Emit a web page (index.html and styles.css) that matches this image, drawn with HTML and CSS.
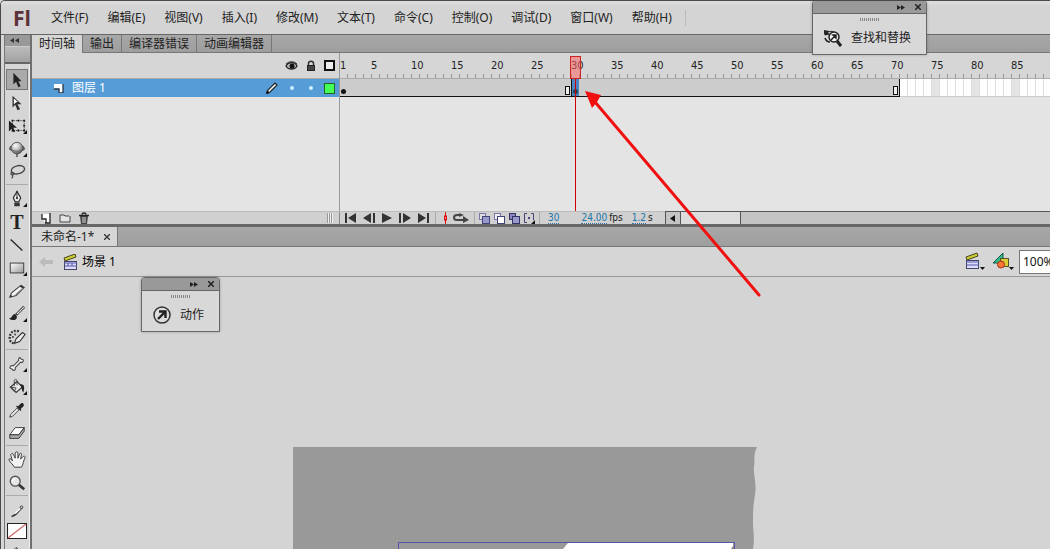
FILE: index.html
```html
<!DOCTYPE html>
<html lang="zh-CN">
<head>
	<meta charset="utf-8">
	<title>未命名-1*</title>
	<link rel="stylesheet" href="styles.css">
</head>
<body>

<div class="app">

	<header class="menubar">
		<span class="logo">Fl</span>
		<nav class="menu">
			<button>文件(F)</button>
			<button>编辑(E)</button>
			<button>视图(V)</button>
			<button>插入(I)</button>
			<button>修改(M)</button>
			<button>文本(T)</button>
			<button>命令(C)</button>
			<button>控制(O)</button>
			<button>调试(D)</button>
			<button>窗口(W)</button>
			<button>帮助(H)</button>
		</nav>
	</header>

	<div class="work">

		<aside class="toolbox">
			<button class="collapse" aria-label="折叠"><svg width="9" height="5" viewBox="0 0 9 5"><path d="M4 0v5L0 2.500zM9 0v5L5 2.500z" fill="#333"/></svg></button>
			<div class="toolhead"></div>
			<div class="tools">
				<button class="tool on" aria-label="选择工具"><svg viewBox="0 0 20 20"><path d="M6 2v13l3-3 2.500 6 2.500-1-2.500-5.500H15z" fill="#222"/></svg></button>
				<button class="tool" aria-label="部分选取工具"><svg viewBox="0 0 20 20"><path d="M5 2v13l3-3 2.500 6 3-1-3-5.500H15z" fill="#333"/><path d="M6.500 5v6.500L9.500 9H11z" fill="#fff"/></svg></button>
				<button class="tool more" aria-label="任意变形工具"><svg viewBox="0 0 20 20"><rect x="5" y="4" width="13" height="11" fill="none" stroke="#222" stroke-dasharray="1 1"/><path d="M4 3h2v2H4zM10.500 3h2v2h-2zM17 3h2v2h-2zM17 8.500h2v2h-2zM17 14h2v2h-2zM10.500 14h2v2h-2zM4 14h2v2H4z" fill="#111"/><path d="M1 4v12l3-3 2 4 2-1-2-4h4z" fill="#222"/></svg></button>
				<button class="tool more" aria-label="3D 旋转工具"><svg viewBox="0 0 20 20"><defs><radialGradient id="ball" cx=".38" cy=".3" r=".75"><stop offset="0" stop-color="#fff"/><stop offset=".5" stop-color="#bbb"/><stop offset="1" stop-color="#444"/></radialGradient></defs><path d="M4 7c-4 3-2 5 6 5s10-2 6-5M10 12v7" fill="none" stroke="#444" stroke-width="1.500"/><circle cx="10" cy="9" r="6.500" fill="url(#ball)" stroke="#555"/><path d="M4 11c3 2 9 2 12 0" fill="none" stroke="#666"/></svg></button>
				<button class="tool" aria-label="套索工具"><svg viewBox="0 0 20 20"><ellipse cx="11" cy="7.500" rx="7.500" ry="4.500" fill="none" stroke="#444" stroke-width="1.500" transform="rotate(-12 11 7.500)"/><path d="M5 10c-3 1-2 4 1 3 2-1 0-3-2-2M5 13c1 2 0 3-1 4" fill="none" stroke="#444" stroke-width="1.200"/></svg></button>
				<hr>
				<button class="tool more" aria-label="钢笔工具"><svg viewBox="0 0 20 20"><path d="M10 1c1 4 4 6 4 8l-2 4H8L6 9c0-2 3-4 4-8z" fill="#eee" stroke="#222" stroke-width="1.200"/><path d="M10 2v6" stroke="#222"/><circle cx="10" cy="9" r="1.200" fill="#222"/><path d="M7 14h6v4H7z" fill="#333"/></svg></button>
				<button class="tool letter" aria-label="文本工具">T</button>
				<button class="tool" aria-label="线条工具"><svg viewBox="0 0 20 20"><path d="M3 4l13 12" stroke="#222" stroke-width="1.500"/></svg></button>
				<button class="tool more" aria-label="矩形工具"><svg viewBox="0 0 20 20"><defs><linearGradient id="box" x2="1" y2="1"><stop offset="0" stop-color="#fff"/><stop offset="1" stop-color="#999"/></linearGradient></defs><rect x="2.500" y="4.500" width="15" height="11" fill="url(#box)" stroke="#333"/></svg></button>
				<button class="tool" aria-label="铅笔工具"><svg viewBox="0 0 20 20"><path d="M2 17l2-5 10-8 4 2-9 9z" fill="#f4f4f4" stroke="#444" stroke-width="1.200"/><path d="M2 17l1-3 2 2zM13 5l3 2 2-1-3-3z" fill="#333"/><path d="M8 14l8-7" stroke="#999"/></svg></button>
				<button class="tool more" aria-label="刷子工具"><svg viewBox="0 0 20 20"><path d="M18 2l-9 9" stroke="#333" stroke-width="3"/><path d="M18 2l-8 8" stroke="#ddd" stroke-width="1.200"/><path d="M1 15c4 0 3-5 7-5l2 3c0 4-5 5-9 2z" fill="#222"/></svg></button>
				<button class="tool" aria-label="喷涂刷工具"><svg viewBox="0 0 20 20"><path d="M7 17l2-5 7-7 3 2-6 8z" fill="#eee" stroke="#333" stroke-width="1.200"/><path d="M12 4C6 1 1 6 2 13c1 3 3 4 6 4" fill="none" stroke="#333" stroke-width="2.500" stroke-dasharray="2 1.500"/><path d="M9 7c-3 0-4 3-4 6" fill="none" stroke="#444" stroke-width="2" stroke-dasharray="2 2"/></svg></button>
				<hr>
				<button class="tool more" aria-label="骨骼工具"><svg viewBox="0 0 20 20"><path d="M6 12l6-6c-1-3 2-4 2-2 1 1 1 1 2 1 2 0 1 4-2 3l-6 6c1 3-2 4-3 2-1-1-1-1-2-1-2-1 0-4 3-3z" fill="#f4f4f4" stroke="#444" stroke-width="1.200"/></svg></button>
				<button class="tool more" aria-label="颜料桶工具"><svg viewBox="0 0 20 20"><path d="M3 10l7-6 6 6-7 6z" fill="#e8e8e8" stroke="#333" stroke-width="1.200"/><path d="M13 7c5-1 6 3 4 9-2-2-1-5-4-9z" fill="#222"/><path d="M7 9V3c0-2 3-2 3 0v5M2 10l7 1-2 4z" fill="none" stroke="#444"/></svg></button>
				<button class="tool" aria-label="滴管工具"><svg viewBox="0 0 20 20"><path d="M2 18l1-3 7-7 2 2-7 7z" fill="#eee" stroke="#333"/><path d="M9 6l5 5 1-1-1-1 3-3c2-2-1-5-3-3l-3 3-1-1z" fill="#222"/></svg></button>
				<button class="tool" aria-label="橡皮擦工具"><svg viewBox="0 0 20 20"><path d="M2 12l6-8h10l-6 8z" fill="#fff" stroke="#333"/><path d="M2 12h10l6-8v4l-6 8H2z" fill="#aaa" stroke="#333"/></svg></button>
				<hr>
				<button class="tool" aria-label="手形工具"><svg viewBox="0 0 20 20"><path d="M7 18c-1-3-6-6-6-9 1-1 3 0 4 2L3 4c1-2 3-1 3 0l2 4V2c1-2 3-1 3 0v6l2-5c1-1 2-1 2 1l-1 5 3-3c1-1 2 0 2 1-2 4-2 8-4 11z" fill="#f2f2f2" stroke="#333"/></svg></button>
				<button class="tool" aria-label="缩放工具"><svg viewBox="0 0 20 20"><path d="M11 11l7 6" stroke="#333" stroke-width="3"/><circle cx="8" cy="8" r="5.500" fill="#e6e6e6" stroke="#555" stroke-width="1.500"/><path d="M5 8c0-2 2-3 3-3" fill="none" stroke="#fff" stroke-width="1.500"/></svg></button>
				<hr>
				<button class="tool" aria-label="笔触颜色"><svg viewBox="0 0 20 20"><path d="M4 17c4 0 5-3 11-9" fill="none" stroke="#333" stroke-width="2"/><path d="M8 14l6-6" stroke="#fff" stroke-width="1.500"/><circle cx="15" cy="7" r="1.500" fill="#ccc" stroke="#333"/></svg></button>
				<button class="swatch" aria-label="无笔触"><svg viewBox="0 0 20 16"><rect x=".5" y=".5" width="19" height="15" fill="#fff" stroke="#222"/><path d="M1 15L19 1" stroke="#c66" stroke-width="1.200"/></svg></button>
				<button class="tool" aria-label="填充颜色"><svg viewBox="0 0 20 20"><path d="M4 10l5-5 7 6-6 6z" fill="#e8e8e8" stroke="#333"/><path d="M9 5l7 6v5l-5-6z" fill="#333"/></svg></button>
			</div>
		</aside>

		<main class="main">

			<div class="tabs">
				<button class="tab on">时间轴</button>
				<button class="tab">输出</button>
				<button class="tab">编译器错误</button>
				<button class="tab">动画编辑器</button>
			</div>

			<section class="timeline">
				<div class="layers">
					<div class="layerhead">
						<span class="cell"><svg width="13" height="10" viewBox="0 0 13 10"><path d="M1 5c2-4 9-5 11 0-2 4-9 4-11 0z" fill="#bbb" stroke="#222" stroke-width="1.300"/><circle cx="7" cy="5" r="2.500" fill="#111"/><path d="M1 3c3-3 8-3 11 0" fill="none" stroke="#333"/></svg></span>
						<span class="cell"><svg width="10" height="11" viewBox="0 0 10 11"><path d="M2.500 5V3.500c0-3 5-3 5 0V5" fill="none" stroke="#333" stroke-width="1.500"/><path d="M1 5h8v6H1z" fill="#222"/><path d="M2 7h6M2 9h6" stroke="#666"/></svg></span>
						<span class="cell"><i class="outline"></i></span>
					</div>
					<div class="layer">
						<svg class="page" width="10" height="10" viewBox="0 0 10 10"><path d="M0 1h9v9H5V6H0z" fill="#fff"/><path d="M9 1v9H5V6H0" fill="none" stroke="#234" stroke-width="1.300"/></svg>
						<span class="name">图层 1</span>
						<svg width="14" height="14" viewBox="0 0 14 14"><path d="M2 12l1-3 7-7 2 2-7 7z" fill="#fff" stroke="#222" stroke-width="1.200"/><path d="M1 13l1-4 3 3z" fill="#111"/></svg>
						<span class="cell"><i class="dot"></i></span>
						<span class="cell"><i class="dot"></i></span>
						<span class="cell"><i class="outline green"></i></span>
					</div>
				</div>

				<div class="frames">
					<div class="ruler">
						<span class="first">1</span><span>5</span><span>10</span><span>15</span><span>20</span><span>25</span><span>30</span><span>35</span><span>40</span><span>45</span><span>50</span><span>55</span><span>60</span><span>65</span><span>70</span><span>75</span><span>80</span><span>85</span>
					</div>
					<div class="track">
						<div class="span" style="width: 232px"><i class="key"></i><i class="end"></i></div>
						<div class="span" style="width: 328px"><i class="key picked"></i><i class="end"></i></div>
						<div class="blank"></div>
					</div>
					<div class="playhead"></div>
				</div>
			</section>

			<div class="controls">
				<div class="layerbuttons">
					<button aria-label="新建图层"><svg width="10" height="11" viewBox="0 0 10 11"><path d="M1 1h8v9H5L1 6z" fill="#fff"/><path d="M9 0v10H4M1 1v5h4v4" fill="none" stroke="#222" stroke-width="1.300"/></svg></button>
					<button aria-label="新建文件夹"><svg width="12" height="10" viewBox="0 0 12 10"><path d="M1 2h4l1 1h5v6H1z" fill="#e4e4e4"/><path d="M1 9V2h4l1 1h4M11 3v6H1" fill="none" stroke="#444"/></svg></button>
					<button aria-label="删除"><svg width="10" height="12" viewBox="0 0 10 12"><path d="M1 4h8l-1 8H2z" fill="#444"/><path d="M4 5v6M6 5v6" stroke="#ddd"/><path d="M0 3.500h10M3 2.500c0-2 4-2 4 0" fill="none" stroke="#222" stroke-width="1.300"/></svg></button>
					<i class="grip"></i>
				</div>
				<div class="playback">
					<button aria-label="第一帧"><svg width="12" height="10" viewBox="0 0 12 10"><path d="M0 0h2v10H0zM11 0v10L3 5z"/></svg></button>
					<button aria-label="后退一帧"><svg width="12" height="10" viewBox="0 0 12 10"><path d="M10 0h2v10h-2zM8 0v10L0 5z"/></svg></button>
					<button aria-label="播放"><svg width="12" height="10" viewBox="0 0 12 10"><path d="M1 0v10l10-5z"/></svg></button>
					<button aria-label="前进一帧"><svg width="12" height="10" viewBox="0 0 12 10"><path d="M0 0h2v10H0zM4 0v10l8-5z"/></svg></button>
					<button aria-label="最后一帧"><svg width="12" height="10" viewBox="0 0 12 10"><path d="M10 0h2v10h-2zM1 0v10l8-5z"/></svg></button>
				</div>
				<div class="loop">
					<button aria-label="帧居中"><svg width="5" height="12" viewBox="0 0 5 12"><path d="M2.500 0v12" stroke="#d11"/><rect x="1.500" y="4" width="2" height="4" fill="#f88" stroke="#d11"/></svg></button>
					<button aria-label="循环"><svg width="16" height="10" viewBox="0 0 16 10"><path d="M8 2H4C0 2 0 7 4 7h7" fill="none" stroke="#444" stroke-width="2"/><path d="M10 3l6 4-6 3zM6 0l5 2-5 2z" fill="#444"/></svg></button>
				</div>
				<div class="onion">
					<button aria-label="绘图纸外观"><svg width="11" height="11" viewBox="0 0 11 11"><rect x=".5" y=".5" width="6" height="6" fill="#ddd" stroke="#77a"/><rect x="3.500" y="3.500" width="7" height="7" fill="#99c" stroke="#447"/></svg></button>
					<button aria-label="绘图纸外观轮廓"><svg width="11" height="11" viewBox="0 0 11 11"><rect x=".5" y=".5" width="6" height="6" fill="#eee" stroke="#77a"/><rect x="3.500" y="3.500" width="7" height="7" fill="#fff" stroke="#447"/></svg></button>
					<button aria-label="编辑多个帧"><svg width="11" height="11" viewBox="0 0 11 11"><rect x=".5" y=".5" width="6" height="6" fill="#88b" stroke="#336"/><rect x="3.500" y="3.500" width="7" height="7" fill="#99c" stroke="#336"/></svg></button>
					<button aria-label="修改标记"><svg width="11" height="11" viewBox="0 0 11 11"><path d="M3 .5H.5v9H3M7 .5h2.500V7" fill="none" stroke="#447"/><path d="M4 4h2v2H4z" fill="#447"/><path d="M11 7v4H7z" fill="#111"/></svg></button>
				</div>
				<div class="readout">
					<a href="#frame" class="now">30</a>
					<span class="fps"><a href="#fps">24.00</a>fps</span>
					<span><a href="#time">1.2</a>s</span>
				</div>
				<div class="scroll">
					<button aria-label="向左滚动"><svg width="5" height="7" viewBox="0 0 5 7"><path d="M5 0v7L0 3.500z" fill="#111"/></svg></button>
					<div class="thumb"></div>
				</div>
			</div>

			<div class="doctabs">
				<div class="doctab"><span>未命名-1*</span><button aria-label="关闭文档"><svg width="6" height="6" viewBox="0 0 6 6"><path d="M0 0l6 6M6 0L0 6" stroke="#333" stroke-width="1.300"/></svg></button></div>
			</div>

			<div class="scenebar">
				<svg width="14" height="10" viewBox="0 0 14 10"><path d="M0 5l6-5v3h8v4H6v3z" fill="#bbb"/></svg>
				<svg class="clap" width="15" height="16" viewBox="0 0 15 16"><path d="M1 4l11-4 1 3L2 7z" fill="#cc3" stroke="#442"/><rect x="1.500" y="7.500" width="12" height="8" fill="#ddf" stroke="#446"/><path d="M1 9h13M2 12h12M5 9v3M9 9v3" stroke="#55a"/></svg>
				<span class="scene">场景 1</span>
				<button class="drop" aria-label="编辑场景"><svg width="20" height="19" viewBox="0 0 20 19"><path d="M1 5l11-4 1 3L2 8z" fill="#cc3" stroke="#442"/><rect x="1.500" y="8.500" width="12" height="8" fill="#ddf" stroke="#446"/><path d="M1 10h13M2 13h12" stroke="#55a"/><path d="M15 15h5l-2.500 3z" fill="#111"/></svg></button>
				<button class="drop" aria-label="编辑元件"><svg width="22" height="19" viewBox="0 0 22 19"><path d="M1 11l10-10v10z" fill="#3b8" stroke="#154"/><rect x="8.500" y="6.500" width="8" height="8" fill="#dc3" stroke="#552"/><circle cx="9" cy="12.500" r="3.500" fill="#f73" stroke="#932"/><path d="M17 15h5l-2.500 3z" fill="#111"/></svg></button>
				<input class="zoom" type="text" value="100%" aria-label="缩放比例">
			</div>

			<div class="canvas">
				<svg class="stage" width="464" height="140" viewBox="0 0 464 140">
					<path d="M0 0h464c-4 8-2 14-3 20s3 18 1 28-2 20-2 28 2 16 0 26v38H0z" fill="#999"/>
					<path d="M270 102l5-6h165v44H270z" fill="#fff"/>
					<path d="M441.500 140V95.500H105.500V140" fill="none" stroke="#55a"/>
					<path d="M441 98v5h-4z" fill="#888"/>
				</svg>
			</div>
		</main>
	</div>

	<div class="panel find">
		<div class="panelhead">
			<button aria-label="展开"><svg width="8" height="5" viewBox="0 0 8 5"><path d="M0 0v5l4-2.500zM4 0v5l4-2.500z" fill="#222"/></svg></button>
			<button aria-label="关闭"><svg width="6" height="6" viewBox="0 0 6 6"><path d="M0 0l6 6M6 0L0 6" stroke="#222" stroke-width="1.500"/></svg></button>
		</div>
		<i class="handle"></i>
		<button class="panelbtn"><svg width="18" height="18" viewBox="0 0 18 18"><path d="M0 1l1 5 4-1-2-1c2-2 5-2 7-1" fill="#222" stroke="#222"/><circle cx="10" cy="8" r="5" fill="#eee" stroke="#222" stroke-width="1.500"/><path d="M13 12l4 5" stroke="#222" stroke-width="3"/><path d="M7 11l4-4M9 6h3v3z" fill="#222" stroke="#222" stroke-width="1.500"/><path d="M1 9c1 3 3 4 5 4" fill="none" stroke="#222" stroke-width="1.500"/></svg>查找和替换</button>
	</div>

	<div class="panel actions">
		<div class="panelhead">
			<button aria-label="展开"><svg width="8" height="5" viewBox="0 0 8 5"><path d="M0 0v5l4-2.500zM4 0v5l4-2.500z" fill="#222"/></svg></button>
			<button aria-label="关闭"><svg width="6" height="6" viewBox="0 0 6 6"><path d="M0 0l6 6M6 0L0 6" stroke="#222" stroke-width="1.500"/></svg></button>
		</div>
		<i class="handle"></i>
		<button class="panelbtn"><svg width="18" height="18" viewBox="0 0 18 18"><circle cx="9" cy="9" r="8" fill="#ddd" stroke="#333" stroke-width="1.500"/><path d="M5 13l7-7M6 5.500h6.500V12" fill="none" stroke="#222" stroke-width="2.400"/></svg>动作</button>
	</div>

	<svg class="arrow" width="180" height="210" viewBox="0 0 180 210">
		<path d="M11 12l164 193" stroke="#f01010" stroke-width="3" stroke-linecap="round"/>
		<path d="M1 1l16 4-4 7-5 6z" fill="#f01010"/>
	</svg>
</div>

</body>
</html>
```

FILE: styles.css
```css
* {
	box-sizing: border-box;
}
body {
	margin: 0;
	height: 100vh;
	overflow: hidden;
	background: #ddd;
	font-family: "Noto Sans", "Noto Sans CJK SC", sans-serif;
	font-size: 12px;
	line-height: 16px;
	color: #222;
}
button {
	margin: 0;
	padding: 0;
	border: 0;
	background: none;
	font: inherit;
	color: inherit;
	white-space: nowrap;
}
svg {
	display: block;
	flex: none;
}
.app {
	position: relative;
	display: flex;
	flex-direction: column;
	height: 100%;
	overflow: hidden;
	border-top: 1px solid #4c484a;
	border-left: 1px solid #4c484a;
	border-radius: 5px 0 0 0;
	background: #d6d6d6;
}

/* menu */
.menubar {
	display: flex;
	flex: none;
	align-items: center;
	height: 34px;
	padding-left: 12px;
	border-bottom: 1px solid #666;
	background: linear-gradient(#dedede, #d4d4d4 6px);
}
.logo {
	width: 38px;
	font-family: "Open Sans", sans-serif;
	font-size: 21px;
	font-weight: bold;
	line-height: 24px;
	color: #5c3338;
}
.menu {
	display: flex;
	gap: 19px;
	padding-right: 13px;
	border-right: 1px solid #bbb;
}

/* toolbox */
.work {
	display: flex;
	flex: 1;
	min-height: 0;
	padding-left: 3px;
}
.toolbox {
	display: flex;
	flex: none;
	flex-direction: column;
	width: 28px;
	border-left: 1px solid #777;
	border-right: 2px solid #707070;
}
.collapse {
	display: flex;
	flex: none;
	align-items: center;
	height: 11px;
	padding-left: 5px;
	background: #999;
}
.toolhead {
	flex: none;
	height: 18px;
	border-top: 1px solid #ccc;
	border-bottom: 2px solid #666;
	background: linear-gradient(#bbb, #a2a2a2);
}
.tools {
	display: flex;
	flex-direction: column;
	padding: 4px 1px 0;
	border-right: 1px solid #eee;
}
.tools hr {
	flex: none;
	width: 100%;
	height: 1px;
	margin: 1px 0 2px;
	border: 0;
	background: #aaa;
}
.tool {
	position: relative;
	display: flex;
	flex: none;
	align-items: center;
	justify-content: center;
	height: 23px;
	border: 1px solid transparent;
}
.tool svg {
	width: 18px;
	height: 18px;
}
.tool.on {
	height: 21px;
	margin: 1px 0;
	border-color: #777;
	background: #aaa;
}
.tool.more::after {
	content: "";
	position: absolute;
	right: 0;
	bottom: 2px;
	border: 2px solid #111;
	border-top-color: transparent;
	border-left-color: transparent;
}
.tool.letter {
	font-family: "Liberation Serif", serif;
	font-size: 20px;
	font-weight: bold;
}
.swatch {
	flex: none;
	padding: 2px 0 1px;
}
.swatch svg {
	width: 20px;
	height: 16px;
	margin: 0 auto;
}

/* tabs */
.main {
	display: flex;
	flex: 1;
	flex-direction: column;
	min-width: 0;
}
.tabs, .doctabs {
	display: flex;
	flex: none;
	border-bottom: 1px solid #777;
	background: linear-gradient(#a8a8a8, #9e9e9e);
}
.tabs {
	height: 18px;
}
.tab {
	padding: 0 7px;
	border-right: 1px solid #777;
}
.tab.on {
	height: 18px;
	background: #d6d6d6;
}

/* timeline */
.timeline {
	display: flex;
	flex: none;
	height: 158px;
	background: #e4e4e4;
}
.layers {
	flex: none;
	width: 308px;
	border-right: 1px solid #999;
}
.layerhead, .ruler {
	display: flex;
	height: 26px;
	border-bottom: 1px solid #aaa;
	background: #d6d6d6;
}
.layerhead {
	align-items: center;
	justify-content: flex-end;
}
.layer {
	display: flex;
	align-items: center;
	height: 18px;
	background: #569dd8;
	color: #fff;
}
.page {
	margin: 0 8px 0 22px;
}
.name {
	flex: 1;
}
.cell {
	display: flex;
	align-items: center;
	justify-content: center;
	width: 19px;
}
.layer svg + .cell {
	margin-left: 3px;
}
.outline {
	width: 11px;
	height: 11px;
	border: 2px solid #111;
	background: #eee;
}
.outline.green {
	border: 1px solid #262;
	background: #4f5;
}
.dot {
	width: 4px;
	height: 4px;
	border-radius: 2px;
	background: #cef;
}
.frames {
	position: relative;
	flex: 1;
	min-width: 0;
	overflow: hidden;
}
.ruler {
	padding-top: 5px;
	background: repeating-linear-gradient(90deg, transparent 0 7px, #999 7px 8px) 0 100% / 100% 4px no-repeat #d6d6d6;
	font-family: "DejaVu Sans Condensed", "DejaVu Sans", sans-serif;
	font-size: 11px;
}
.ruler span {
	flex: none;
	width: 40px;
}
.ruler .first {
	width: 31px;
}
.track {
	display: flex;
	height: 18px;
}
.span {
	display: flex;
	flex: none;
	align-items: flex-end;
	justify-content: space-between;
	border-right: 1px solid #111;
	border-bottom: 1px solid #111;
	background: #ccc;
}
.key {
	display: flex;
	align-items: flex-end;
	width: 7px;
	height: 17px;
	padding: 0 0 2px 1px;
}
.key::before {
	content: "";
	width: 5px;
	height: 5px;
	border-radius: 3px;
	background: #111;
}
.picked {
	background: #4b86c0;
}
.picked::before {
	background: #245;
}
.end {
	width: 5px;
	height: 9px;
	margin: 0 1px 1px 0;
	border: 1px solid #111;
	background: #eee;
}
.blank {
	flex: 1;
	border-bottom: 1px solid #ccc;
	background:
		repeating-linear-gradient(90deg, transparent 0 7px, #ddd 7px 8px),
		repeating-linear-gradient(90deg, #fff 0 32px, #e4e4e4 32px 40px);
}
.playhead {
	position: absolute;
	top: 3px;
	bottom: 0;
	left: 231px;
	display: flex;
	flex-direction: column;
	align-items: center;
	width: 9px;
}
.playhead::before {
	content: "";
	width: 9px;
	height: 21px;
	border: 1px solid #c22;
	background: rgba(255, 100, 100, .55);
}
.playhead::after {
	content: "";
	flex: 1;
	width: 1px;
	background: #c00;
}

/* timeline controls */
.controls {
	display: flex;
	flex: none;
	align-items: center;
	height: 16px;
	border-top: 1px solid #bbb;
	border-bottom: 3px solid #686868;
	background: #d0d0d0;
	font-family: "DejaVu Sans Condensed", "DejaVu Sans", sans-serif;
	font-size: 10px;
	line-height: 12px;
}
.controls > div {
	display: flex;
	flex: none;
	align-items: center;
	height: 12px;
}
.controls .layerbuttons {
	width: 308px;
	gap: 8px;
	padding: 0 6px 0 9px;
	border-right: 1px solid #888;
}
.grip {
	width: 6px;
	height: 10px;
	margin-left: auto;
	background: repeating-linear-gradient(90deg, #999 0 1px, #eee 1px 2px);
}
.controls .playback {
	gap: 6px;
	padding: 0 6px 0 5px;
	border-right: 1px solid #aaa;
	fill: #333;
}
.controls .loop {
	gap: 5px;
	padding: 0 5px 0 7px;
	border-right: 1px solid #aaa;
}
.controls .onion {
	gap: 4px;
	padding: 0 4px;
	border-right: 1px solid #aaa;
}
.controls .readout {
	gap: 9px;
	padding: 0 12px 0 8px;
}
.readout a {
	border-bottom: 1px dotted #37a;
	color: #27a;
	text-decoration: none;
	line-height: 10px;
}
.readout span a {
	margin-right: 2px;
}
.now {
	margin-right: 13px;
}
.controls .scroll {
	flex: 1;
	border-left: 1px solid #555;
	background: #c4c4c4;
	box-shadow: 0 -1px #555;
}
.scroll button {
	display: flex;
	align-items: center;
	justify-content: center;
	width: 15px;
	height: 12px;
	border-right: 1px solid #555;
}
.thumb {
	width: 60px;
	height: 12px;
	border-right: 1px solid #555;
	background: #dcdcdc;
}

/* document */
.doctabs {
	height: 20px;
}
.doctab {
	display: flex;
	align-items: center;
	gap: 10px;
	padding: 0 7px 0 9px;
	border-right: 1px solid #777;
	background: #d6d6d6;
}
.scenebar {
	display: flex;
	flex: none;
	align-items: center;
	height: 30px;
	padding-left: 7px;
	border-bottom: 1px solid #999;
}
.clap {
	margin: 0 4px 0 10px;
}
.scene {
	flex: 1;
	color: #000;
}
.drop {
	margin-right: 7px;
}
.drop + .zoom {
	margin-left: -2px;
}
.zoom {
	width: 31px;
	height: 24px;
	padding: 0 0 0 3px;
	border: 1px solid #777;
	border-right: 0;
	border-radius: 0;
	background: #fff;
	font: inherit;
	color: #111;
}
.canvas {
	position: relative;
	flex: 1;
	overflow: hidden;
	background: #d4d4d4;
}
.stage {
	position: absolute;
	top: 170px;
	left: 261px;
}

/* floating panels */
.panel {
	position: absolute;
	height: 55px;
	border: 1px solid #666;
	border-radius: 4px 4px 0 0;
	background: #d8d8d8;
	box-shadow: 0 0 3px rgba(0, 0, 0, .25);
}
.find {
	top: -1px;
	left: 811px;
	width: 115px;
}
.actions {
	top: 276px;
	left: 140px;
	width: 79px;
}
.panelhead {
	display: flex;
	align-items: center;
	justify-content: flex-end;
	gap: 10px;
	height: 13px;
	padding-right: 5px;
	border-bottom: 1px solid #666;
	border-radius: 3px 3px 0 0;
	background: #999;
}
.handle {
	display: block;
	width: 19px;
	height: 3px;
	margin: 4px auto 0;
	background: repeating-linear-gradient(90deg, #888 0 1px, transparent 1px 2px);
}
.panelbtn {
	display: flex;
	align-items: center;
	gap: 9px;
	margin: 8px 0 0 11px;
}
.arrow {
	position: absolute;
	top: 89px;
	left: 583px;
	fill: none;
	pointer-events: none;
}
```
